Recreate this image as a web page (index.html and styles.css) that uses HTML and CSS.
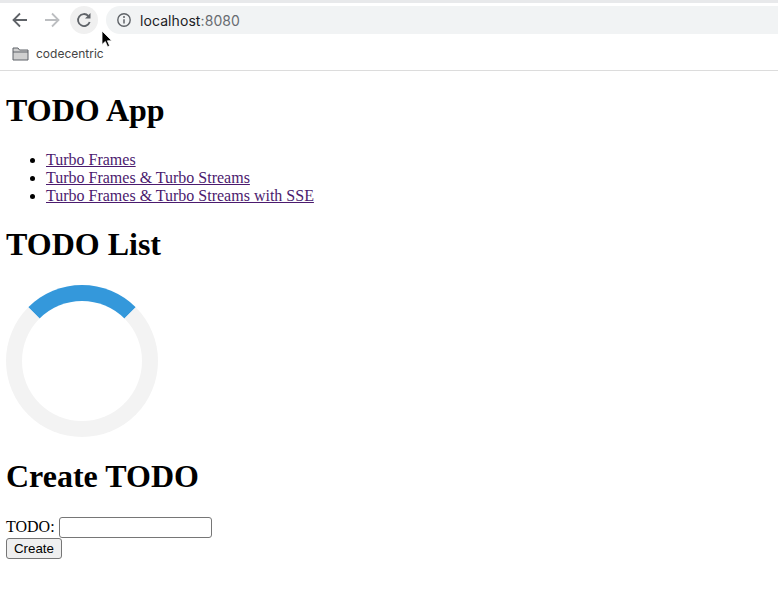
FILE: index.html
```html
<!DOCTYPE html>
<html>
<head>
    <title>TODO App</title>
    <link rel="stylesheet" href="styles.css">
</head>
<body>

    <div class="browser-bar">
        <div class="toolbar">
            <button class="nav-btn" type="button" aria-label="Back">
                <svg width="18" height="18" viewBox="0 0 18 18"><path d="M16 9H3M9 2.500 2.500 9 9 15.500" fill="none" stroke="#5f6368" stroke-width="1.8"/></svg>
            </button>
            <button class="nav-btn" type="button" aria-label="Forward">
                <svg width="18" height="18" viewBox="0 0 18 18"><path d="M2 9h13M9 2.500 15.500 9 9 15.500" fill="none" stroke="#bcbec1" stroke-width="1.8"/></svg>
            </button>
            <button class="nav-btn reload" type="button" aria-label="Reload">
                <svg width="18" height="18" viewBox="0 0 18 18"><path d="M14.700 11A6 6 0 1 1 13.300 4.800" fill="none" stroke="#5f6368" stroke-width="1.8"/><path d="M15.500 2v5.500H10z" fill="#5f6368"/></svg>
            </button>
            <div class="address">
                <svg width="16" height="16" viewBox="0 0 16 16"><circle cx="8" cy="8" r="6.200" fill="none" stroke="#5f6368" stroke-width="1.400"/><path d="M8 7.200v4.200" stroke="#5f6368" stroke-width="1.500"/><circle cx="8" cy="5" r="1" fill="#5f6368"/></svg>
                <span class="host">localhost<span class="port">:8080</span></span>
            </div>
        </div>
        <div class="bookmarks">
            <svg width="17" height="14" viewBox="0 0 17 14"><path d="M1 13V1h5l1.500 2H16v10z" fill="#d0d0d0" stroke="#5f6368"/><path d="M1 5h15" stroke="#5f6368"/></svg>
            <span>codecentric</span>
        </div>
        <svg class="cursor" width="12" height="18" viewBox="0 0 12 18"><path d="M1 1v13.500l3.300-3 2.300 5.200 2-.9-2.200-5h4.400z" fill="#000" stroke="#fff" stroke-width=".8"/></svg>
    </div>

    <div class="page">
        <h1>TODO App</h1>
        <ul>
            <li><a href="#">Turbo Frames</a></li>
            <li><a href="#">Turbo Frames &amp; Turbo Streams</a></li>
            <li><a href="#">Turbo Frames &amp; Turbo Streams with SSE</a></li>
        </ul>

        <h1>TODO List</h1>
        <div class="loader"></div>

        <h1>Create TODO</h1>
        <form>
            <label for="todo">TODO:</label>
            <input type="text" id="todo">
            <br>
            <button class="create" type="button">Create</button>
        </form>
    </div>

</body>
</html>
```

FILE: styles.css
```css
body {
    margin: 0;
    background: #fff;
    color: #000;
    font-family: "Liberation Serif", serif;
    font-size: 16px;
}

.browser-bar {
    position: relative;
    height: 67px;
    border-top: 3px solid #e8e9eb;
    border-bottom: 1px solid #dcdcdc;
    font-family: Inter, "Liberation Sans", sans-serif;
}

.toolbar {
    display: flex;
    align-items: center;
    height: 34px;
    padding-left: 6px;
}

.nav-btn {
    display: flex;
    align-items: center;
    justify-content: center;
    width: 28px;
    height: 28px;
    margin-right: 4px;
    padding: 0;
    border: none;
    border-radius: 50%;
    background: none;
}

.reload {
    background: #f0f0f0;
    margin-right: 8px;
}

.address {
    display: flex;
    align-items: center;
    gap: 8px;
    flex: 1;
    height: 28px;
    padding-left: 10px;
    border-radius: 14px 0 0 14px;
    background: #f1f3f4;
    font-size: 14px;
    line-height: 27px;
}

.host {
    color: #202124;
    letter-spacing: 0.08px;
}

.port {
    color: #686c71;
}

.bookmarks {
    display: flex;
    align-items: center;
    gap: 7px;
    height: 33px;
    padding-left: 12px;
    color: #444;
    font-size: 12px;
}

.cursor {
    position: absolute;
    left: 101px;
    top: 27px;
}

.page {
    padding: 0 6px;
}

h1 {
    margin: 21.44px 0;
    font-size: 32px;
}

ul {
    margin: 21.44px 0;
    padding-left: 40px;
}

a {
    color: #4b1a6e;
}

.loader {
    width: 120px;
    height: 120px;
    border: 16px solid #f3f3f3;
    border-top-color: #3498db;
    border-radius: 50%;
}

input[type="text"] {
    box-sizing: border-box;
    width: 153px;
    height: 21px;
    padding: 1px 2px;
    border: 1px solid #767676;
    border-radius: 3px;
    font-size: 13.333px;
}

.create {
    box-sizing: border-box;
    width: 56px;
    height: 21px;
    padding: 1px 6px;
    border: 1px solid #767676;
    border-radius: 3px;
    background: #efefef;
    font-family: "Liberation Sans", sans-serif;
    font-size: 13.333px;
}
```
